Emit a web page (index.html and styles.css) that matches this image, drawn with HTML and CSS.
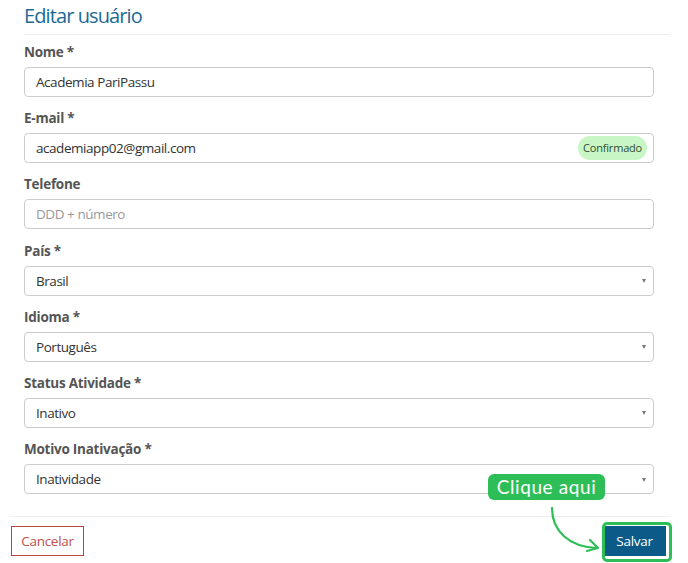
FILE: index.html
```html
<!DOCTYPE html>
<html lang="pt-BR">
<head>
<meta charset="utf-8">
<title>Editar usuário</title>
<link rel="stylesheet" href="styles.css">
</head>
<body>
<div class="modal">
  <div class="header">
    <h1 class="title">Editar usuário</h1>
  </div>
  <form class="form">
    <div class="group">
      <label class="label">Nome *</label>
      <div class="control">Academia PariPassu</div>
    </div>
    <div class="group">
      <label class="label">E-mail *</label>
      <div class="control with-badge">
        <span>academiapp02@gmail.com</span>
        <span class="badge">Confirmado</span>
      </div>
    </div>
    <div class="group">
      <label class="label">Telefone</label>
      <div class="control placeholder">DDD + número</div>
    </div>
    <div class="group">
      <label class="label">País *</label>
      <div class="control select"><span>Brasil</span><span class="caret"></span></div>
    </div>
    <div class="group">
      <label class="label">Idioma *</label>
      <div class="control select"><span>Português</span><span class="caret"></span></div>
    </div>
    <div class="group">
      <label class="label">Status Atividade *</label>
      <div class="control select"><span>Inativo</span><span class="caret"></span></div>
    </div>
    <div class="group">
      <label class="label">Motivo Inativação *</label>
      <div class="control select"><span>Inatividade</span><span class="caret"></span></div>
    </div>
  </form>
  <div class="footer">
    <button class="btn btn-cancel" type="button">Cancelar</button>
    <button class="btn btn-save" type="button">Salvar</button>
  </div>
</div>

<div class="tip">Clique aqui</div>
<svg class="arrow" width="70" height="50" viewBox="0 0 70 50">
  <path d="M3 1 C3 24 20 40 48 41" fill="none" stroke="#2dbe58" stroke-width="2.2" stroke-linecap="round"/>
  <path d="M41 33 L49 41 L38 44" fill="none" stroke="#2dbe58" stroke-width="2.2" stroke-linecap="round" stroke-linejoin="round"/>
</svg>
<div class="highlight"></div>
</body>
</html>
```
FILE: styles.css
```css
* { box-sizing: border-box; }
html, body { margin: 0; padding: 0; background: #fff; }
body {
  font-family: "Open Sans", "Noto Sans", sans-serif;
  width: 688px;
  height: 563px;
  overflow: hidden;
  position: relative;
}
.header {
  margin: 0 18px 0 24px;
  border-bottom: 1px solid #eeeeee;
  height: 35px;
}
.title {
  margin: 0;
  font-weight: 400;
  font-size: 20px;
  letter-spacing: -0.9px;
  line-height: 32px;
  color: #1b6a95;
}
.form {
  padding: 7px 0 0 24px;
  width: 654px;
}
.group { margin-bottom: 11.2px; }
.group:last-child { margin-bottom: 0; }
.label {
  display: block;
  font-size: 13.5px;
  font-weight: 700;
  letter-spacing: -0.25px;
  line-height: 20px;
  color: #555555;
  margin-bottom: 5px;
}
.control {
  height: 30px;
  border: 1px solid #cccccc;
  border-radius: 4px;
  padding: 0 11px;
  font-size: 13.5px;
  letter-spacing: -0.45px;
  line-height: 28px;
  color: #333333;
  display: flex;
  align-items: center;
  justify-content: space-between;
}
.placeholder { color: #999999; }
.with-badge { padding-right: 6px; }
.badge {
  background: #c8f7c5;
  color: #2e4d2e;
  font-size: 11px;
  letter-spacing: -0.2px;
  line-height: 24px;
  height: 24px;
  padding: 0 5px;
  border-radius: 12px;
}
.select { padding-right: 7px; }
.caret {
  width: 0; height: 0;
  border-left: 2.5px solid transparent;
  border-right: 2.5px solid transparent;
  border-top: 4px solid #777777;
  margin-top: 1px;
}
.footer {
  margin: 22px 18px 0 10px;
  border-top: 1px solid #eeeeee;
  padding: 9px 4px 0 1px;
  display: flex;
  justify-content: space-between;
}
.btn {
  font-family: "Open Sans", "Noto Sans", sans-serif;
  font-size: 13.5px;
  letter-spacing: -0.3px;
  height: 30px;
  padding: 0;
  border-radius: 0;
  cursor: pointer;
}
.btn-cancel {
  background: #fff;
  color: #c0504d;
  border: 1px solid #b94545;
  width: 73px;
}
.btn-save {
  background: #0b5a87;
  color: #ffffff;
  border: 1px solid #0b5a87;
  width: 63px;
}
.tip {
  position: absolute;
  left: 488px;
  top: 474px;
  width: 117px;
  height: 26px;
  background: #2dbe58;
  color: #ffffff;
  border-radius: 6px;
  font-family: "Lato", "Open Sans", sans-serif;
  font-size: 19px;
  line-height: 26px;
  text-align: center;
  letter-spacing: 0.6px;
}
.arrow {
  position: absolute;
  left: 549px;
  top: 507px;
}
.highlight {
  position: absolute;
  left: 602px;
  top: 522px;
  width: 70px;
  height: 40px;
  border: 3px solid #2dbe58;
  border-radius: 5px;
}
```
